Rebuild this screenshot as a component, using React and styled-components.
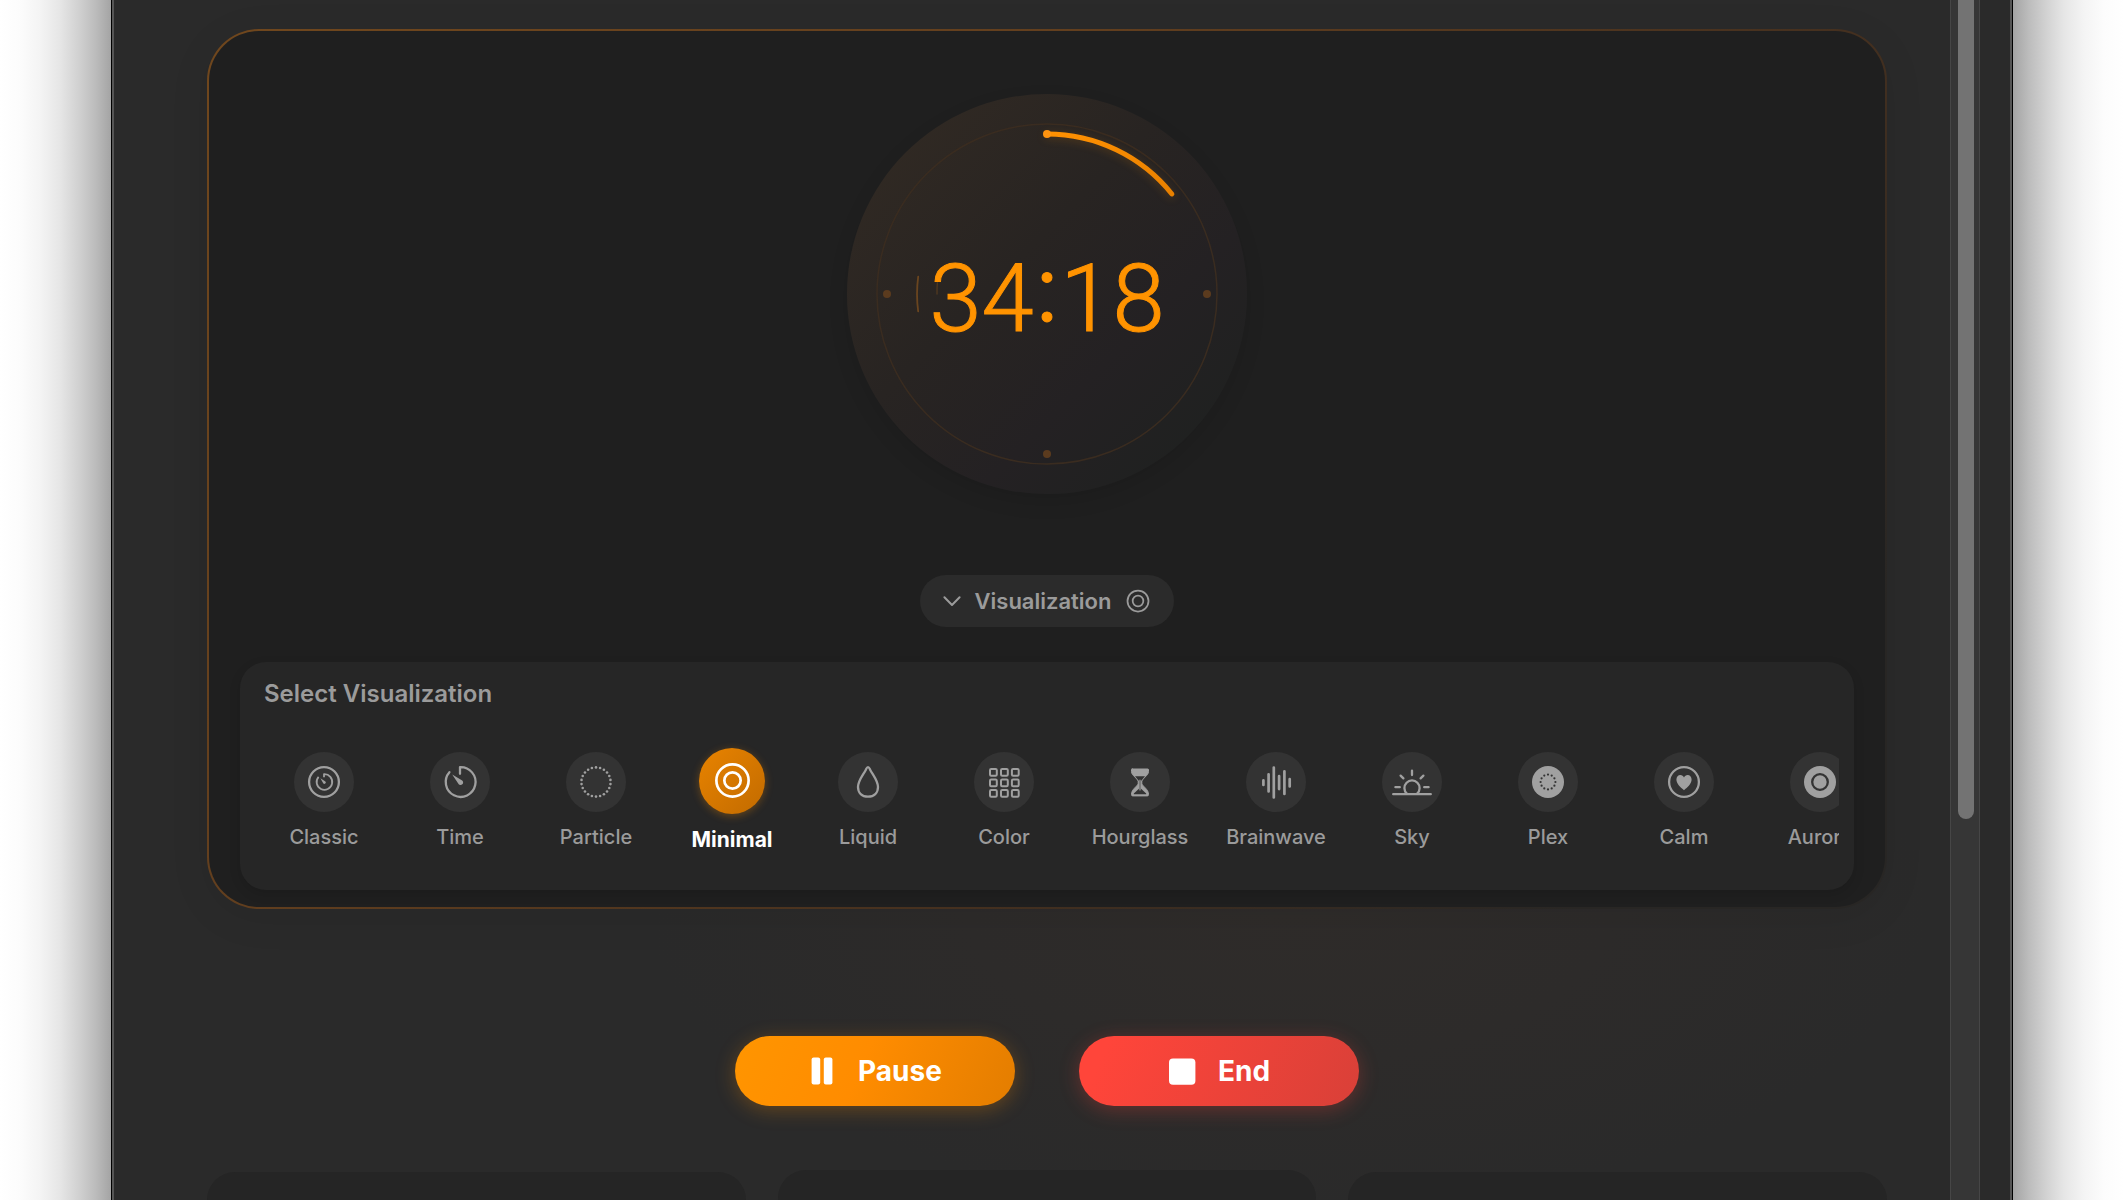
import React, { useState } from "react";
import styled, { createGlobalStyle, css } from "styled-components";

const GlobalStyle = createGlobalStyle`
  * {
    box-sizing: border-box;
  }

  body {
    margin: 0;
    background: #fff;
    font-family: Inter, "Liberation Sans", sans-serif;
    -webkit-font-smoothing: antialiased;
  }

  button {
    margin: 0;
    padding: 0;
    border: none;
    background: none;
    color: inherit;
    font: inherit;
    cursor: pointer;
  }
`;

// angle in degrees, 12 o'clock is 0
const pointOnCircle = (cx, cy, r, deg) => {
  const rad = (deg * Math.PI) / 180;
  return [cx + r * Math.sin(rad), cy - r * Math.cos(rad)];
};

const dots = (cx, cy, r, count, size, fill) =>
  Array.from({ length: count }, (_, i) => {
    const [x, y] = pointOnCircle(cx, cy, r, (i * 360) / count);
    return <circle key={i} cx={x} cy={y} r={size} fill={fill} stroke="none" />;
  });

const Svg = ({ children, size = 40, box = 40, width = 2.3 }) => (
  <svg
    width={size}
    height={size}
    viewBox={`0 0 ${box} ${box}`}
    fill="none"
    stroke="currentColor"
    strokeWidth={width}
    strokeLinecap="round"
    strokeLinejoin="round"
    aria-hidden="true"
  >
    {children}
  </svg>
);

const ClassicIcon = () => (
  <Svg>
    <circle cx="20" cy="20" r="14.9" />
    <path d="M14.6 14.8A7.8 7.8 0 1 0 20 12.2V15.2" strokeWidth="1.8" strokeLinecap="butt" />
    <path d="M16.4 16.3L21.4 19.5A1.4 1.4 0 1 1 19.2 21.2Z" fill="currentColor" stroke="none" />
  </Svg>
);

const TimeIcon = () => (
  <Svg>
    <path d="M9.4 10.2A14.9 14.9 0 1 0 20 5.1V11.8" />
    <path d="M12.2 12.4L21.8 18.2A2.6 2.6 0 1 1 18.2 21.6Z" fill="currentColor" stroke="none" />
  </Svg>
);

const ParticleIcon = () => <Svg>{dots(20, 20, 14.6, 22, 1.3, "currentColor")}</Svg>;

const MinimalIcon = ({ size, width = 2.5 }) => (
  <Svg size={size} width={width}>
    <circle cx="20" cy="20" r="15" />
    <circle cx="20" cy="20" r="7.6" />
  </Svg>
);

const LiquidIcon = () => (
  <Svg>
    <path d="M20 5.2C21 5.2 21.4 6.2 22 7.4C24.4 12.4 30 18.6 30 25C30 31 26 34.6 20 34.6S10 31 10 25C10 18.6 15.6 12.4 18 7.4C18.6 6.2 19 5.2 20 5.2Z" />
  </Svg>
);

const ColorIcon = () => (
  <Svg>
    {[6, 17, 27.9].map((x) =>
      [7, 17.5, 28].map((y) => (
        <rect key={`${x}-${y}`} x={x} y={y} width="6.8" height="6.8" rx="1.2" strokeWidth="2" />
      ))
    )}
  </Svg>
);

const HourglassIcon = () => (
  <Svg>
    <path
      d="M12.2 7H27.8Q28.6 7 28.5 8V9.5C28.5 13.5 22.6 16 21.8 19.6V21.4C22.6 24.6 28.5 27 28.5 32.4Q28.5 33.9 27.4 33.9H12.6Q11.5 33.9 11.5 32.4C11.5 27 17.4 24.6 18.2 21.4V19.6C17.4 16 11.5 13.5 11.5 9.5V8Q11.4 7 12.2 7Z"
      fill="currentColor"
      strokeWidth="1"
    />
    <path d="M15 14.2H25L20.8 19.2V26.6L26.2 31.4V32.2H13.8V31.4L19.2 26.6V19.2Z" fill="#333" stroke="none" />
    <path d="M20 18V28" strokeWidth="1.2" />
  </Svg>
);

const BrainwaveIcon = () => (
  <Svg width={2.7}>
    <path d="M7.4 18.4V23M12.6 12.3V29.5M17.8 5.6V35.4M23.1 14.2V27.1M28.4 9.3V32M33.7 17.2V24.5" />
  </Svg>
);

const SkyIcon = () => (
  <Svg>
    <path d="M1.2 32.2H38.8M14.8 31.6A7.6 7.6 0 1 1 25.2 31.6M20 8.6V13M8.6 13.6L11.4 16.4M31.4 13.6L28.6 16.4M3.4 25.2H7.8M32.2 25.2H36.6" />
  </Svg>
);

const PlexIcon = () => (
  <Svg>
    <circle cx="20" cy="20" r="16" fill="currentColor" stroke="none" />
    {dots(20, 20, 7.4, 12, 1.1, "#333")}
  </Svg>
);

const CalmIcon = () => (
  <Svg>
    <circle cx="20" cy="20" r="14.9" />
    <path
      d="M20 28.2C16.6 25.6 12.4 21.8 12.4 17.6C12.4 14.8 14.2 13 16.3 13C18 13 19.4 14 20 15.4C20.6 14 22 13 23.7 13C25.8 13 27.6 14.8 27.6 17.6C27.6 21.8 23.4 25.6 20 28.2Z"
      fill="currentColor"
      stroke="none"
    />
  </Svg>
);

const AuroraIcon = () => (
  <Svg>
    <circle cx="20" cy="20" r="16" fill="currentColor" stroke="none" />
    <circle cx="20" cy="20" r="7.8" stroke="#333" />
  </Svg>
);

const VISUALIZATIONS = [
  { name: "Classic", Icon: ClassicIcon },
  { name: "Time", Icon: TimeIcon },
  { name: "Particle", Icon: ParticleIcon },
  { name: "Minimal", Icon: MinimalIcon },
  { name: "Liquid", Icon: LiquidIcon },
  { name: "Color", Icon: ColorIcon },
  { name: "Hourglass", Icon: HourglassIcon },
  { name: "Brainwave", Icon: BrainwaveIcon },
  { name: "Sky", Icon: SkyIcon },
  { name: "Plex", Icon: PlexIcon },
  { name: "Calm", Icon: CalmIcon },
  { name: "Aurora", Icon: AuroraIcon },
];

const TOTAL = 40 * 60;
const LEFT = 34 * 60 + 18;

const Dial = () => {
  const [endX, endY] = pointOnCircle(200, 200, 160, ((TOTAL - LEFT) / TOTAL) * 360);
  const minutes = Math.floor(LEFT / 60);
  const seconds = String(LEFT % 60).padStart(2, "0");

  return (
    <DialFace>
      <DialDrawing viewBox="0 0 400 400" aria-hidden="true">
        <defs>
          <linearGradient id="arc" x1="0" y1="0" x2="1" y2="1">
            <stop offset="0" stopColor="#ff9102" />
            <stop offset="1" stopColor="#e88000" />
          </linearGradient>
        </defs>
        <circle cx="200" cy="200" r="170" stroke="#3a2c20" strokeWidth="1.5" />
        <path d="M71.2 182.6A130 130 0 0 0 71.2 217.4" stroke="#6a451f" strokeWidth="1.8" />
        <path d="M90.4 188.6A110 110 0 0 0 90 200" stroke="#4f3820" strokeWidth="1.4" />
        <DialArc d={`M200 40A160 160 0 0 1 ${endX} ${endY}`} stroke="url(#arc)" strokeWidth="5" />
        <circle cx="200" cy="40" r="4" fill="#ff9410" />
        <circle cx="360" cy="200" r="4" fill="#5b3b1e" />
        <circle cx="200" cy="360" r="4" fill="#5b3b1e" />
        <circle cx="40" cy="200" r="4" fill="#5b3b1e" />
      </DialDrawing>
      <DialTime>
        {minutes}
        <Colon>:</Colon>
        {seconds}
      </DialTime>
    </DialFace>
  );
};

const App = () => {
  const [selected, setSelected] = useState("Minimal");
  const [open, setOpen] = useState(true);

  return (
    <Desktop>
      <GlobalStyle />
      <Gutter $side="left" />
      <Window>
        <Content>
          <TimerCard>
            <Dial />
            <Toggle aria-expanded={open} onClick={() => setOpen(!open)}>
              <Svg size={20} box={20} width={2}>
                <path d="M2.4 6.2L10 14L17.6 6.2" />
              </Svg>
              <span>Visualization</span>
              <MinimalIcon size={28} />
            </Toggle>
            {open && (
              <Picker>
                <PickerTitle>Select Visualization</PickerTitle>
                <PickerRow>
                  {VISUALIZATIONS.map(({ name, Icon }) => {
                    const active = name === selected;
                    return (
                      <Option key={name} aria-pressed={active} onClick={() => setSelected(name)}>
                        <IconSlot>
                          <IconCircle $active={active}>
                            <Icon size={active ? 43 : 40} />
                          </IconCircle>
                        </IconSlot>
                        <OptionLabel $active={active}>{name}</OptionLabel>
                      </Option>
                    );
                  })}
                </PickerRow>
              </Picker>
            )}
          </TimerCard>
          <Actions>
            <ActionButton $kind="pause">
              <Svg size={28} box={28}>
                <rect x="3.6" y="0.4" width="8.6" height="27.2" rx="2" fill="currentColor" stroke="none" />
                <rect x="15.8" y="0.4" width="8.6" height="27.2" rx="2" fill="currentColor" stroke="none" />
              </Svg>
              Pause
            </ActionButton>
            <ActionButton $kind="end">
              <Svg size={28} box={28}>
                <rect x="1" y="1.4" width="26.4" height="26.4" rx="4" fill="currentColor" stroke="none" />
              </Svg>
              End
            </ActionButton>
          </Actions>
          <Stats>
            <StatCard />
            <StatCard $raised />
            <StatCard />
          </Stats>
        </Content>
        <ScrollTrack>
          <ScrollThumb />
        </ScrollTrack>
      </Window>
      <Gutter $side="right" />
    </Desktop>
  );
};

export default App;

const Desktop = styled.div`
  display: flex;
  height: 100vh;
  overflow: hidden;
`;

// the soft shadow the window throws on both sides
const Gutter = styled.div`
  flex: 0 0 111px;
  background: linear-gradient(
    to ${({ $side }) => $side},
    #a4a4a4 0%,
    #bcbcbc 14%,
    #d2d2d2 30%,
    #e6e6e6 46%,
    #f4f4f4 64%,
    #fcfcfc 82%,
    #fff 100%
  );
`;

const Window = styled.main`
  flex: 1;
  min-width: 0;
  display: flex;
  padding-right: 32px;
  background: radial-gradient(ellipse 640px 300px at 62% 76%, #2f2c2a 0%, #2d2b2a 50%, #2a2a2a 100%) #2a2a2a;
  border: solid #000;
  border-width: 0 1px;
  box-shadow: inset 2px 0 #555, inset -2px 0 #555;
`;

const Content = styled.div`
  flex: 1;
  min-width: 0;
  display: flex;
  flex-direction: column;
  padding: 29px 63px 0 95px;
`;

const TimerCard = styled.section`
  flex: none;
  display: flex;
  flex-direction: column;
  align-items: center;
  padding: 63px 31px 17px;
  border: 2px solid transparent;
  border-radius: 52px;
  background: linear-gradient(#1f1f1f, #1f1f1f) padding-box,
    linear-gradient(135deg, #70471d 0%, #633f1e 34%, #45301f 64%, #282624 88%) border-box;
  box-shadow: 0 8px 40px rgba(0, 0, 0, 0.08);
`;

const DialFace = styled.div`
  display: grid;
  place-items: center;
  width: 400px;
  height: 400px;
  border-radius: 50%;
  background: linear-gradient(135deg, #302923 12%, #282422 42%, #242123 66%, #1f2120 90%);
  box-shadow: 0 8px 20px rgba(0, 0, 0, 0.1);

  > * {
    grid-area: 1 / 1;
  }
`;

const DialDrawing = styled.svg`
  width: 100%;
  height: 100%;
  fill: none;
  stroke-linecap: round;
`;

const DialArc = styled.path`
  filter: drop-shadow(0 2px 4px rgba(255, 145, 0, 0.2));
`;

const DialTime = styled.div`
  padding-top: 8px;
  color: #ff9300;
  font-family: Roboto, "Liberation Sans", sans-serif;
  font-size: 94px;
  line-height: 100px;
  font-weight: 300;
  -webkit-text-stroke: 1px #ff9300;
  white-space: nowrap;
`;

const Colon = styled.span`
  font-family: Inter, "Liberation Sans", sans-serif;
  font-feature-settings: "case";
`;

const Toggle = styled.button`
  display: flex;
  align-items: center;
  gap: 13px;
  height: 52px;
  margin-top: 81px;
  padding: 0 22px;
  border-radius: 26px;
  background: #2b2b2b;
  color: #9b9b9b;
  font-size: 22px;
  line-height: 28px;
  font-weight: 600;
`;

const Picker = styled.div`
  align-self: stretch;
  height: 228px;
  margin-top: 35px;
  padding: 16px 15px 0 16px;
  border-radius: 26px;
  background: #262626;
  box-shadow: 0 4px 12px rgba(0, 0, 0, 0.12);
`;

const PickerTitle = styled.h2`
  margin: 0;
  padding-left: 8px;
  color: #9b9b9b;
  font-size: 24px;
  line-height: 32px;
  font-weight: 600;
`;

const PickerRow = styled.div`
  display: flex;
  overflow: hidden;
  padding: 36px 0 20px;
`;

const Option = styled.button`
  flex: 0 0 136px;
  display: flex;
  flex-direction: column;
  align-items: center;
`;

const IconSlot = styled.span`
  display: flex;
  align-items: center;
  justify-content: center;
  height: 72px;
`;

const IconCircle = styled.span`
  display: flex;
  align-items: center;
  justify-content: center;
  width: 60px;
  height: 60px;
  border-radius: 50%;
  background: #333;
  color: #a0a0a0;

  ${({ $active }) =>
    $active &&
    css`
      width: 66px;
      height: 66px;
      margin-bottom: 3px;
      background: linear-gradient(135deg, #e88300, #c26b00);
      box-shadow: 0 2px 8px rgba(255, 145, 0, 0.3);
      color: #fff;
    `}
`;

const OptionLabel = styled.span`
  margin-top: 5px;
  color: ${({ $active }) => ($active ? "#fff" : "#9b9b9b")};
  font-size: ${({ $active }) => ($active ? 21 : 20)}px;
  line-height: ${({ $active }) => ($active ? 34 : 28)}px;
  font-weight: ${({ $active }) => ($active ? 700 : 500)};
`;

const Actions = styled.div`
  flex: none;
  display: flex;
  justify-content: center;
  gap: 64px;
  margin-top: 127px;
`;

const ActionButton = styled.button`
  display: flex;
  align-items: center;
  justify-content: center;
  gap: 22px;
  width: 280px;
  height: 70px;
  border-radius: 35px;
  color: #fff;
  font-size: 28px;
  line-height: 36px;
  font-weight: 700;

  ${({ $kind }) =>
    $kind === "pause"
      ? css`
          background: linear-gradient(115deg, #ff9500 0%, #ff8c00 45%, #e37d00 100%);
          box-shadow: 0 4px 20px rgba(255, 145, 0, 0.28);
        `
      : css`
          background: linear-gradient(115deg, #ff453a 10%, #d94038 100%);
          box-shadow: 0 4px 20px rgba(255, 69, 58, 0.28);
        `}
`;

const Stats = styled.div`
  flex: 1;
  display: grid;
  grid-template-columns: repeat(3, 1fr);
  gap: 32px;
  padding-top: 64px;
`;

const StatCard = styled.div`
  margin-top: ${({ $raised }) => ($raised ? 0 : 2)}px;
  border-radius: 28px 28px 0 0;
  background: #252525;
`;

const ScrollTrack = styled.div`
  flex: 0 0 30px;
  background: #363636;
  border: solid #464646;
  border-width: 0 1px;
`;

const ScrollThumb = styled.div`
  width: 16px;
  height: 68.25vh;
  margin-left: 7px;
  border-radius: 0 0 8px 8px;
  background: #737373;
`;
